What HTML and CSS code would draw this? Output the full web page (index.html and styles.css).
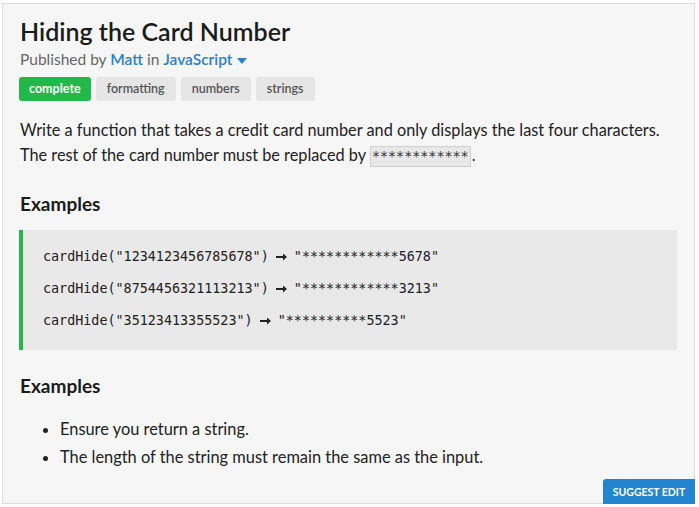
FILE: index.html
```html
<!DOCTYPE html>
<html>
<head>
<meta charset="utf-8">
<link rel="stylesheet" href="styles.css">
</head>
<body>
<div class="card">
  <h1 class="title">Hiding the Card Number</h1>
  <div class="meta">Published by <a class="link">Matt</a> in <a class="link">JavaScript</a> <svg class="caret" width="10" height="6" viewBox="0 0 10 6"><path d="M0 0H10L5 6Z" fill="#2a7fcf"/></svg></div>
  <div class="tags">
    <span class="tag tag-green">complete</span>
    <span class="tag">formatting</span>
    <span class="tag">numbers</span>
    <span class="tag">strings</span>
  </div>
  <p class="desc">Write a function that takes a credit card number and only displays the last four characters. The rest of the card number must be replaced by <code class="inline">************</code>.</p>
  <h2 class="section">Examples</h2>
  <div class="codeblock">
    <div class="codeline">cardHide("1234123456785678") <svg class="arrow" width="11" height="8" viewBox="0 0 11 8" aria-label="➞"><path d="M0 3H7V0.5L11 4L7 7.5V5H0Z" fill="#222"/></svg> "************5678"</div>
    <div class="codeline">cardHide("8754456321113213") <svg class="arrow" width="11" height="8" viewBox="0 0 11 8" aria-label="➞"><path d="M0 3H7V0.5L11 4L7 7.5V5H0Z" fill="#222"/></svg> "************3213"</div>
    <div class="codeline">cardHide("35123413355523") <svg class="arrow" width="11" height="8" viewBox="0 0 11 8" aria-label="➞"><path d="M0 3H7V0.5L11 4L7 7.5V5H0Z" fill="#222"/></svg> "**********5523"</div>
  </div>
  <h2 class="section section-2">Examples</h2>
  <ul class="notes">
    <li>Ensure you return a string.</li>
    <li>The length of the string must remain the same as the input.</li>
  </ul>
  <button class="suggest">SUGGEST EDIT</button>
</div>
</body>
</html>
```
FILE: styles.css
```css
html, body { margin: 0; padding: 0; background: #fff; }
body { padding: 3px 4px 3px 2px; font-family: Lato, "Open Sans", sans-serif; color: #222; }
.card {
  position: relative;
  background: #f6f6f6;
  border: 1px solid #dcdcdc;
  box-sizing: border-box;
  height: 501px;
  padding: 12px 17px 0 17px;
}
.title { margin: 0; font-size: 25px; font-weight: 600; line-height: 30px; color: #1b1b1b; }
.meta { margin-top: 3px; font-size: 15.5px; line-height: 20px; color: #666; }
.link { color: #2a7fcf; font-weight: 600; text-decoration: none; }
.caret { vertical-align: middle; margin-left: 1px; }
.tags { display: flex; gap: 5px; margin-top: 8px; margin-left: -1px; }
.tag { display: inline-block; height: 24px; line-height: 24px; padding: 0 11px; font-size: 12.5px; font-weight: 600; color: #555; background: #e6e6e6; border-radius: 3px; }
.tag-green { background: #21b94a; color: #fff; font-weight: 700; padding: 0 10px; }
.desc { margin: 16px 0 0; font-size: 16.3px; line-height: 25px; color: #222; }
.inline { font-family: "DejaVu Sans Mono", monospace; font-size: 13.4px; line-height: 20px; background: #e8e8e8; border: 1px solid #cfcfcf; padding: 2px 1px; margin-right: 1px; color: #333; }
.section { margin: 25px 0 0; font-size: 19px; font-weight: 700; line-height: 24px; color: #1b1b1b; }
.section-2 { margin-top: 24px; }
.codeblock { margin-top: 14px; margin-left: -1px; background: #e9e9e9; border-left: 4px solid #21b94a; padding: 11px 20px 13px 20px; }
.codeline { font-family: "DejaVu Sans Mono", monospace; font-size: 13.4px; line-height: 32px; color: #222; white-space: pre; }
.arrow { vertical-align: 0; margin: 0 -1px 0 -1px; }
.notes { margin: 17px 0 0; padding-left: 40px; font-size: 16.4px; line-height: 28px; }
.suggest {
  position: absolute; right: -1px; bottom: -1px;
  width: 92px; height: 25px; border: 0; border-radius: 3px 0 0 0;
  background: #2384d0; color: #fff; font-family: Lato, sans-serif; font-weight: 700; font-size: 10.5px; padding: 0;
}
```
